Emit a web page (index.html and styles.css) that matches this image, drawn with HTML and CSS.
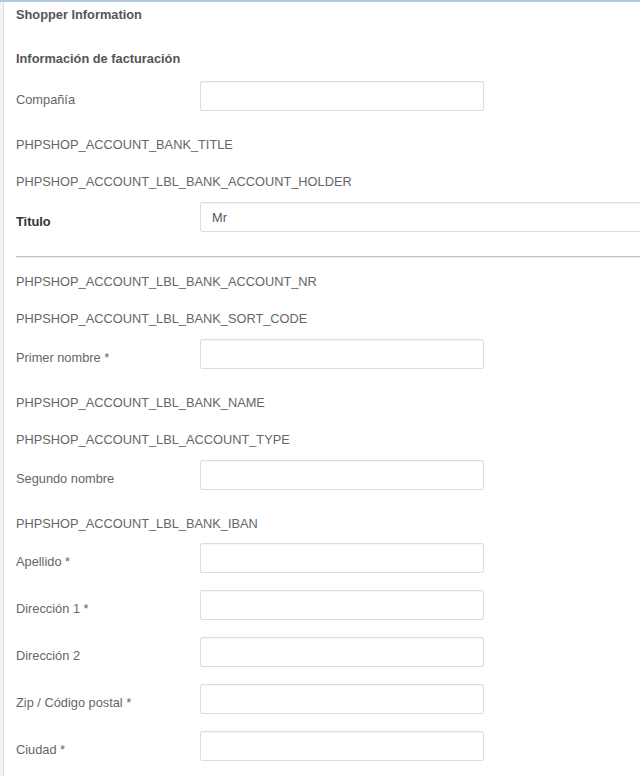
FILE: index.html
```html
<!DOCTYPE html>
<html>
<head>
<meta charset="utf-8">
<link rel="stylesheet" href="styles.css">
</head>
<body>
<div class="frame">
  <div class="panel">
    <h2 class="title">Shopper Information</h2>
    <h3 class="subtitle">Información de facturación</h3>
    <div class="row field"><label class="lbl">Compañía</label><input class="inp" type="text"></div>
    <div class="row text"><span class="lbl">PHPSHOP_ACCOUNT_BANK_TITLE</span></div>
    <div class="row text"><span class="lbl">PHPSHOP_ACCOUNT_LBL_BANK_ACCOUNT_HOLDER</span></div>
    <div class="row field"><label class="lbl strong">Titulo</label><input class="inp wide" type="text" value="Mr"></div>
    <hr class="sep">
    <div class="row text"><span class="lbl">PHPSHOP_ACCOUNT_LBL_BANK_ACCOUNT_NR</span></div>
    <div class="row text"><span class="lbl">PHPSHOP_ACCOUNT_LBL_BANK_SORT_CODE</span></div>
    <div class="row field"><label class="lbl">Primer nombre *</label><input class="inp" type="text"></div>
    <div class="row text"><span class="lbl">PHPSHOP_ACCOUNT_LBL_BANK_NAME</span></div>
    <div class="row text"><span class="lbl">PHPSHOP_ACCOUNT_LBL_ACCOUNT_TYPE</span></div>
    <div class="row field"><label class="lbl">Segundo nombre</label><input class="inp" type="text"></div>
    <div class="row text short"><span class="lbl">PHPSHOP_ACCOUNT_LBL_BANK_IBAN</span></div>
    <div class="row field"><label class="lbl">Apellido *</label><input class="inp" type="text"></div>
    <div class="row field"><label class="lbl">Dirección 1 *</label><input class="inp" type="text"></div>
    <div class="row field"><label class="lbl">Dirección 2</label><input class="inp" type="text"></div>
    <div class="row field"><label class="lbl">Zip / Código postal *</label><input class="inp" type="text"></div>
    <div class="row field"><label class="lbl">Ciudad *</label><input class="inp" type="text"></div>
  </div>
</div>
</body>
</html>
```
FILE: styles.css
```css
html, body {
  margin: 0;
  padding: 0;
  background: #ffffff;
  overflow: hidden;
}
body {
  font-family: "Liberation Sans", Arial, sans-serif;
  font-size: 12.8px;
  color: #666666;
}
.frame {
  border-top: 2px solid #b3c6da;
  padding-left: 3px;
  background: #f3f3f3;
  height: 776px;
  box-sizing: border-box;
  overflow: hidden;
}
.panel {
  background: #ffffff;
  border-left: 1px solid #dcdcdc;
  height: 100%;
  padding-left: 12px;
}
.title {
  margin: 0;
  font-size: 12.8px;
  font-weight: bold;
  color: #555555;
  line-height: 20px;
  padding-top: 3px;
  height: 42px;
}
.subtitle {
  margin: 0;
  font-size: 12.8px;
  font-weight: bold;
  color: #555555;
  line-height: 20px;
  padding-top: 2px;
  height: 32px;
}
.row {
  display: flex;
  align-items: flex-start;
}
.row.field {
  height: 30px;
  margin-bottom: 17px;
}
.row.field .lbl {
  padding-top: 9px;
}
.row.text {
  height: 37px;
}
.row.text.short {
  height: 36px;
}
.row.text .lbl {
  padding-top: 7px;
}
.lbl {
  display: block;
  width: 184px;
  flex: none;
  line-height: 20px;
  color: #666666;
  white-space: nowrap;
}
.row.field .lbl.strong {
  font-weight: bold;
  color: #333333;
  padding-top: 10px;
}
.inp {
  box-sizing: border-box;
  width: 284px;
  height: 30px;
  margin: 0;
  border: 1px solid #dddddd;
  border-radius: 2px;
  box-shadow: inset 0 1px 1px rgba(0,0,0,0.04);
  background: #ffffff;
  font-family: "Liberation Sans", Arial, sans-serif;
  font-size: 12.8px;
  color: #555555;
  padding: 0 11px;
}
.inp.wide {
  width: 520px;
  flex: none;
}
.sep {
  margin: 24px 0 7px 0;
  border: 0;
  border-top: 1px solid #c4c4c4;
  border-bottom: 1px solid #ececec;
  height: 0;
}
```
